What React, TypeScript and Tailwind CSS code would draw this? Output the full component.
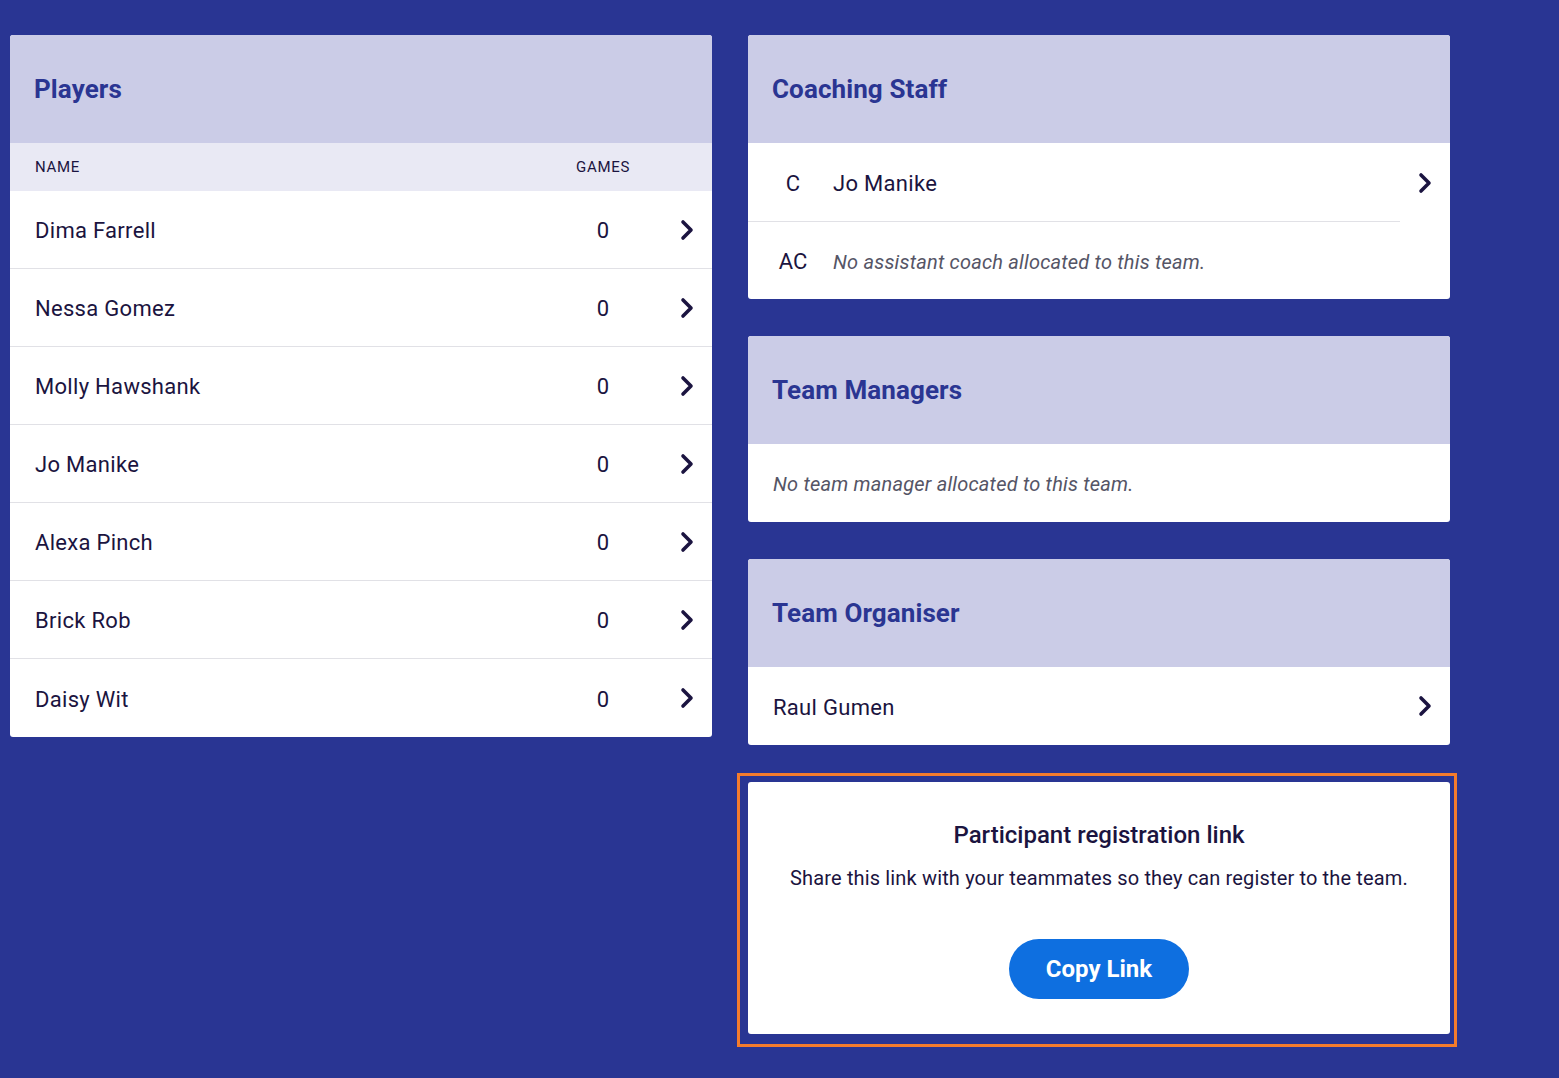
const players = [
  "Dima Farrell",
  "Nessa Gomez",
  "Molly Hawshank",
  "Jo Manike",
  "Alexa Pinch",
  "Brick Rob",
  "Daisy Wit",
];

function Chevron() {
  return (
    <svg width="14" height="22" viewBox="0 0 14 22" fill="none" className="shrink-0">
      <path
        d="M3 3l8 8-8 8"
        stroke="#1b1440"
        strokeWidth="3.6"
        strokeLinecap="round"
        strokeLinejoin="round"
      />
    </svg>
  );
}

function CardHeader({ title }: { title: string }) {
  return (
    <div className="flex h-[108px] items-center bg-[#cbcce7] px-6">
      <h2 className="text-[26px] font-bold tracking-[0.1px] text-[#2a3592]">{title}</h2>
    </div>
  );
}

export default function App() {
  return (
    <div
      className="min-h-screen bg-[#293593] pl-[10px] pt-[35px] text-[#1b1440]"
      style={{ fontFamily: "Roboto, 'Liberation Sans', sans-serif" }}
    >
      <div className="flex items-start gap-[36px]">
        {/* Players */}
        <div className="w-[702px] overflow-hidden rounded-[3px] bg-white">
          <CardHeader title="Players" />
          <div className="flex h-[48px] items-center bg-[#e9e9f4] text-[15px] tracking-[0.7px]">
            <span className="flex-1 pl-[25px]">NAME</span>
            <span className="w-[100px] text-center">GAMES</span>
            <span className="w-[59px]" />
          </div>
          {players.map((name, i) => (
            <div
              key={name}
              className={
                i < players.length - 1
                  ? "flex h-[78px] items-center border-b border-[#e1e1e6]"
                  : "flex h-[78px] items-center"
              }
            >
              <span className="flex-1 pl-[25px] pt-[2px] text-[22px] tracking-[0.3px]">{name}</span>
              <span className="w-[100px] pt-[2px] text-center text-[22px]">0</span>
              <span className="flex w-[59px] justify-end pr-[18px]">
                <Chevron />
              </span>
            </div>
          ))}
        </div>

        {/* Right column */}
        <div className="flex w-[702px] flex-col">
          <div className="overflow-hidden rounded-[3px] bg-white">
            <CardHeader title="Coaching Staff" />
            <div className="flex">
              <div className="flex flex-1 flex-col">
                <div className="flex h-[79px] items-center border-b border-[#e1e1e6] pt-[2px]">
                  <span className="w-[85px] pl-[5px] text-center text-[22px]">C</span>
                  <span className="text-[22px] tracking-[0.3px]">Jo Manike</span>
                </div>
                <div className="flex h-[77px] items-center pt-[2px]">
                  <span className="w-[85px] pl-[5px] text-center text-[22px]">AC</span>
                  <span className="text-[20px] italic tracking-[0.2px] text-[#555566]">
                    No assistant coach allocated to this team.
                  </span>
                </div>
              </div>
              <div className="flex h-[79px] w-[50px] items-center justify-end pr-[18px]">
                <Chevron />
              </div>
            </div>
          </div>

          <div className="mt-[37px] overflow-hidden rounded-[3px] bg-white">
            <CardHeader title="Team Managers" />
            <div className="flex h-[78px] items-center pl-[25px] pt-[2px]">
              <span className="text-[20px] italic tracking-[0.2px] text-[#555566]">
                No team manager allocated to this team.
              </span>
            </div>
          </div>

          <div className="mt-[37px] overflow-hidden rounded-[3px] bg-white">
            <CardHeader title="Team Organiser" />
            <div className="flex h-[78px] items-center justify-between pl-[25px] pr-[18px]">
              <span className="pt-[2px] text-[22px] tracking-[0.3px]">Raul Gumen</span>
              <Chevron />
            </div>
          </div>

          <div className="-ml-[11px] mt-[28px] w-[720px] border-[3px] border-[#f47c2c] pb-[10px] pl-[8px] pr-[4px] pt-[6px]">
            <div className="flex h-[252px] flex-col items-center rounded-[3px] bg-white pt-[35px]">
              <h3 className="text-[24px] font-medium text-[#1b1440]">Participant registration link</h3>
              <p className="mt-[10px] text-[20px] tracking-[0.15px]">
                Share this link with your teammates so they can register to the team.
              </p>
              <button className="mt-[46px] h-[60px] w-[180px] rounded-full bg-[#0e6fe0] text-[24px] font-bold text-white">
                Copy Link
              </button>
            </div>
          </div>
        </div>
      </div>
    </div>
  );
}
